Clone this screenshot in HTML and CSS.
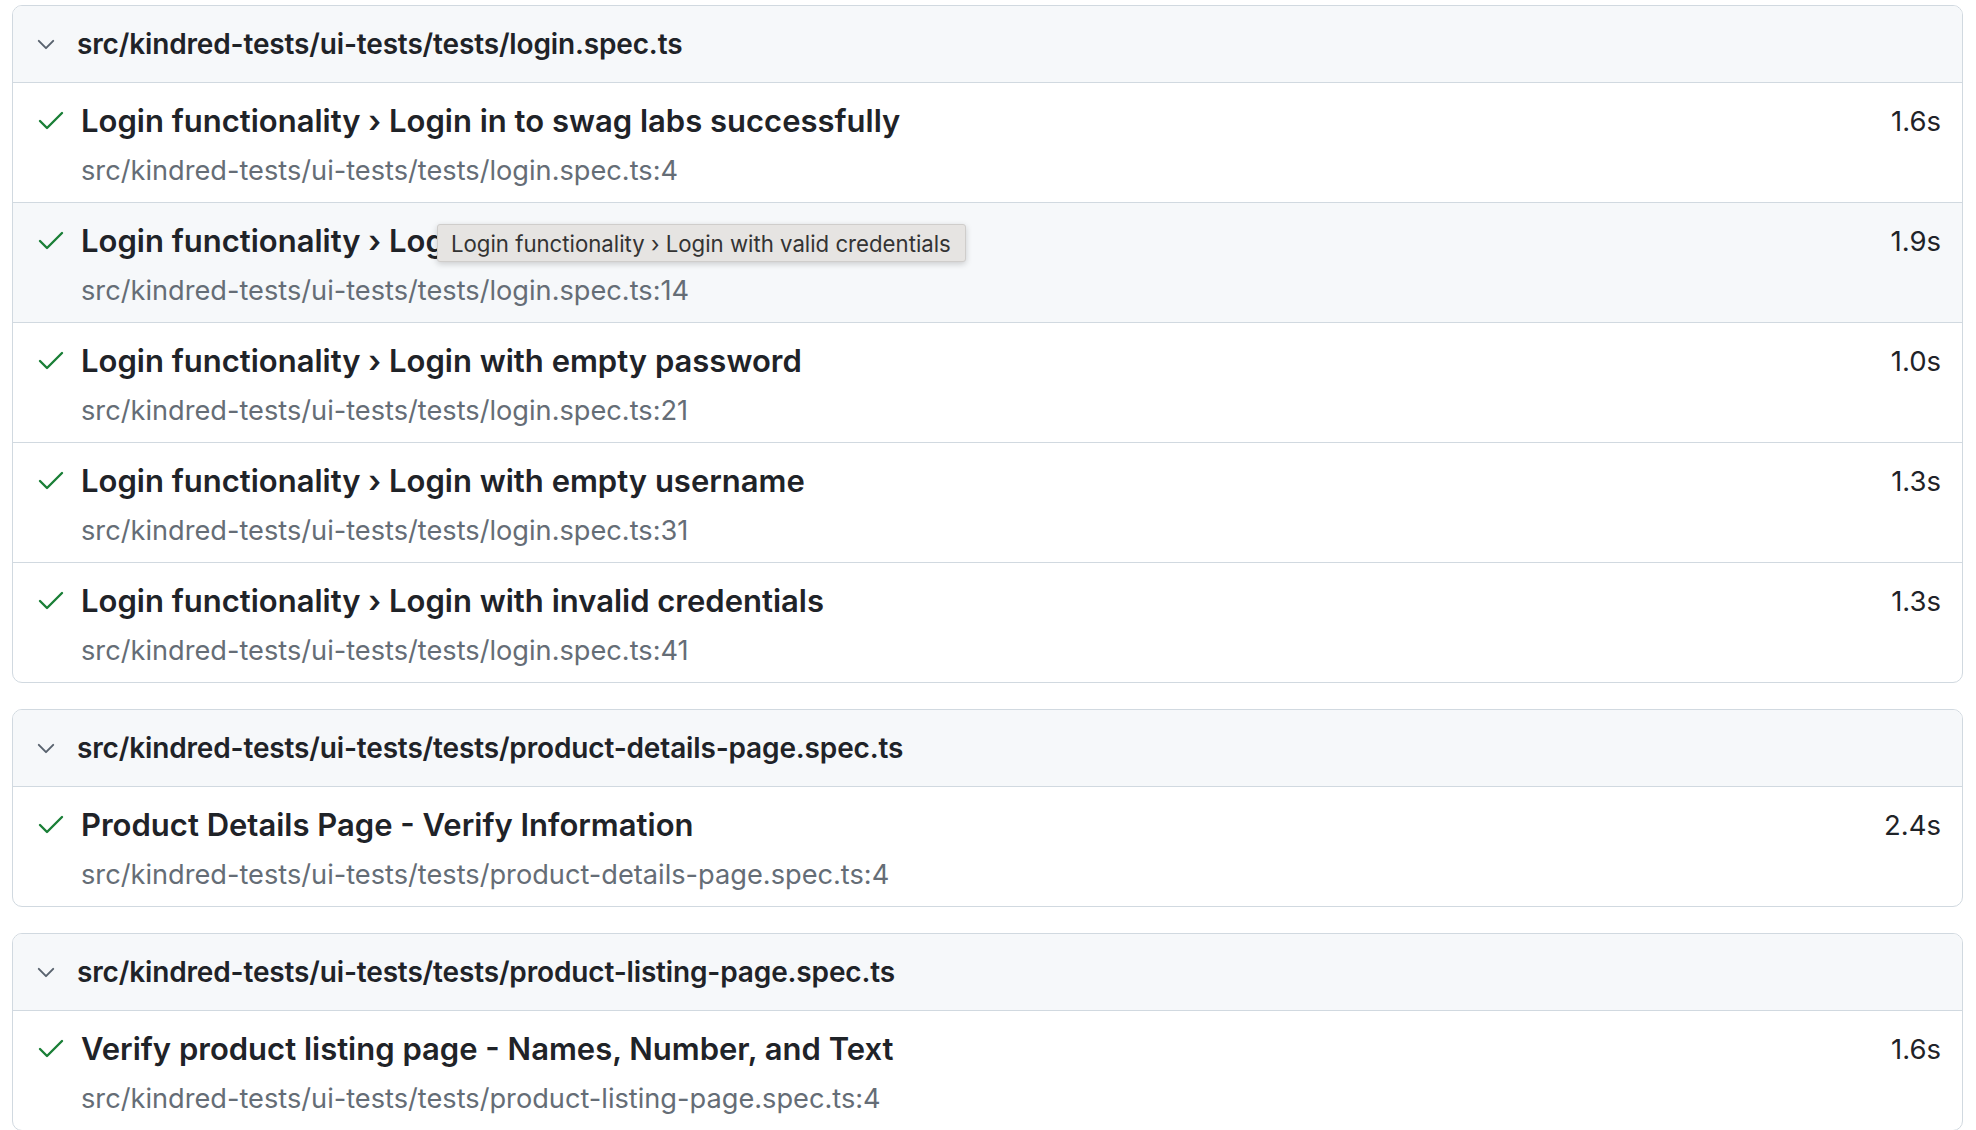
FILE: index.html
```html
<!DOCTYPE html>
<html lang="en">
<head>
<meta charset="utf-8">
<title>Test report</title>
<link rel="stylesheet" href="styles.css">
</head>
<body>
<main class="report">

  <section class="file-card">
    <div class="file-header">
      <svg class="chevron" viewBox="0 0 20 12" width="20" height="12"><polyline points="2,2 10,10 18,2"/></svg>
      <span class="file-name">src/kindred-tests/ui-tests/tests/login.spec.ts</span>
    </div>
    <div class="test-row">
      <svg class="check" viewBox="0 0 28 22" width="28" height="22"><polyline points="3,11 10,18 25,3"/></svg>
      <div class="test-body">
        <div class="test-title">Login functionality › Login in to swag labs successfully</div>
        <div class="test-location">src/kindred-tests/ui-tests/tests/login.spec.ts:4</div>
      </div>
      <div class="test-duration">1.6s</div>
    </div>
    <div class="test-row hovered">
      <svg class="check" viewBox="0 0 28 22" width="28" height="22"><polyline points="3,11 10,18 25,3"/></svg>
      <div class="test-body">
        <div class="test-title">Login functionality › Login with valid credentials</div>
        <div class="test-location">src/kindred-tests/ui-tests/tests/login.spec.ts:14</div>
      </div>
      <div class="test-duration">1.9s</div>
      <div class="tooltip">Login functionality › Login with valid credentials</div>
    </div>
    <div class="test-row">
      <svg class="check" viewBox="0 0 28 22" width="28" height="22"><polyline points="3,11 10,18 25,3"/></svg>
      <div class="test-body">
        <div class="test-title">Login functionality › Login with empty password</div>
        <div class="test-location">src/kindred-tests/ui-tests/tests/login.spec.ts:21</div>
      </div>
      <div class="test-duration">1.0s</div>
    </div>
    <div class="test-row">
      <svg class="check" viewBox="0 0 28 22" width="28" height="22"><polyline points="3,11 10,18 25,3"/></svg>
      <div class="test-body">
        <div class="test-title">Login functionality › Login with empty username</div>
        <div class="test-location">src/kindred-tests/ui-tests/tests/login.spec.ts:31</div>
      </div>
      <div class="test-duration">1.3s</div>
    </div>
    <div class="test-row">
      <svg class="check" viewBox="0 0 28 22" width="28" height="22"><polyline points="3,11 10,18 25,3"/></svg>
      <div class="test-body">
        <div class="test-title">Login functionality › Login with invalid credentials</div>
        <div class="test-location">src/kindred-tests/ui-tests/tests/login.spec.ts:41</div>
      </div>
      <div class="test-duration">1.3s</div>
    </div>
  </section>

  <section class="file-card">
    <div class="file-header">
      <svg class="chevron" viewBox="0 0 20 12" width="20" height="12"><polyline points="2,2 10,10 18,2"/></svg>
      <span class="file-name">src/kindred-tests/ui-tests/tests/product-details-page.spec.ts</span>
    </div>
    <div class="test-row">
      <svg class="check" viewBox="0 0 28 22" width="28" height="22"><polyline points="3,11 10,18 25,3"/></svg>
      <div class="test-body">
        <div class="test-title">Product Details Page - Verify Information</div>
        <div class="test-location">src/kindred-tests/ui-tests/tests/product-details-page.spec.ts:4</div>
      </div>
      <div class="test-duration">2.4s</div>
    </div>
  </section>

  <section class="file-card">
    <div class="file-header">
      <svg class="chevron" viewBox="0 0 20 12" width="20" height="12"><polyline points="2,2 10,10 18,2"/></svg>
      <span class="file-name">src/kindred-tests/ui-tests/tests/product-listing-page.spec.ts</span>
    </div>
    <div class="test-row">
      <svg class="check" viewBox="0 0 28 22" width="28" height="22"><polyline points="3,11 10,18 25,3"/></svg>
      <div class="test-body">
        <div class="test-title">Verify product listing page - Names, Number, and Text</div>
        <div class="test-location">src/kindred-tests/ui-tests/tests/product-listing-page.spec.ts:4</div>
      </div>
      <div class="test-duration">1.6s</div>
    </div>
  </section>

</main>
</body>
</html>
```

FILE: styles.css
```css
* { box-sizing: border-box; }

html, body {
  margin: 0;
  background: #ffffff;
}

body {
  font-family: Inter, "Noto Sans", "Liberation Sans", sans-serif;
  color: #1f2328;
  overflow: hidden;
}

.report {
  padding: 5px 13px 0 12px;
  display: flex;
  flex-direction: column;
  gap: 26px;
}

.file-card {
  border: 1px solid #d1d9e0;
  border-radius: 10px;
  overflow: visible;
  background: #ffffff;
}

.file-header {
  height: 77px;
  display: flex;
  align-items: center;
  background: #f6f8fa;
  border-bottom: 1px solid #d1d9e0;
  border-radius: 9px 9px 0 0;
  padding-left: 24px;
}

.chevron {
  width: 18px;
  height: 11px;
  fill: none;
  stroke: #59636e;
  stroke-width: 2.2;
  stroke-linecap: round;
  stroke-linejoin: round;
  margin-right: 22px;
  margin-top: 1px;
}

.file-name {
  font-size: 28px;
  font-weight: 600;
  color: #1f2328;
  letter-spacing: -0.15px;
}

.test-row {
  position: relative;
  height: 120px;
  display: flex;
  align-items: flex-start;
  border-bottom: 1px solid #d1d9e0;
  padding: 20px 21px 0 24px;
}

.file-card .test-row:last-child {
  border-bottom: none;
  border-radius: 0 0 9px 9px;
  height: 119px;
}

.test-row.hovered {
  background: #f6f8fa;
}

.check {
  flex: none;
  width: 28px;
  height: 22px;
  margin-top: 7px;
  fill: none;
  stroke: #1a7f37;
  stroke-width: 2.4;
  stroke-linecap: round;
  stroke-linejoin: round;
  margin-right: 16px;
}

.test-body {
  flex: 1;
  min-width: 0;
}

.test-title {
  font-size: 31px;
  font-weight: 600;
  line-height: 36px;
  color: #1f2328;
  white-space: nowrap;
}

.test-location {
  font-size: 27.2px;
  line-height: 32px;
  margin-top: 16px;
  color: #656d76;
  white-space: nowrap;
}

.test-duration {
  flex: none;
  font-size: 27.5px;
  line-height: 36px;
  color: #1f2328;
}

.tooltip {
  position: absolute;
  left: 424px;
  top: 21px;
  width: 529px;
  height: 38px;
  padding: 0 13px;
  display: flex;
  align-items: center;
  background: #e6e4e2;
  border: 1px solid #cfcdcb;
  border-radius: 3px;
  box-shadow: 0 2px 6px rgba(0, 0, 0, 0.18);
  font-size: 22.2px;
  color: #333333;
  white-space: nowrap;
  overflow: hidden;
}
```
